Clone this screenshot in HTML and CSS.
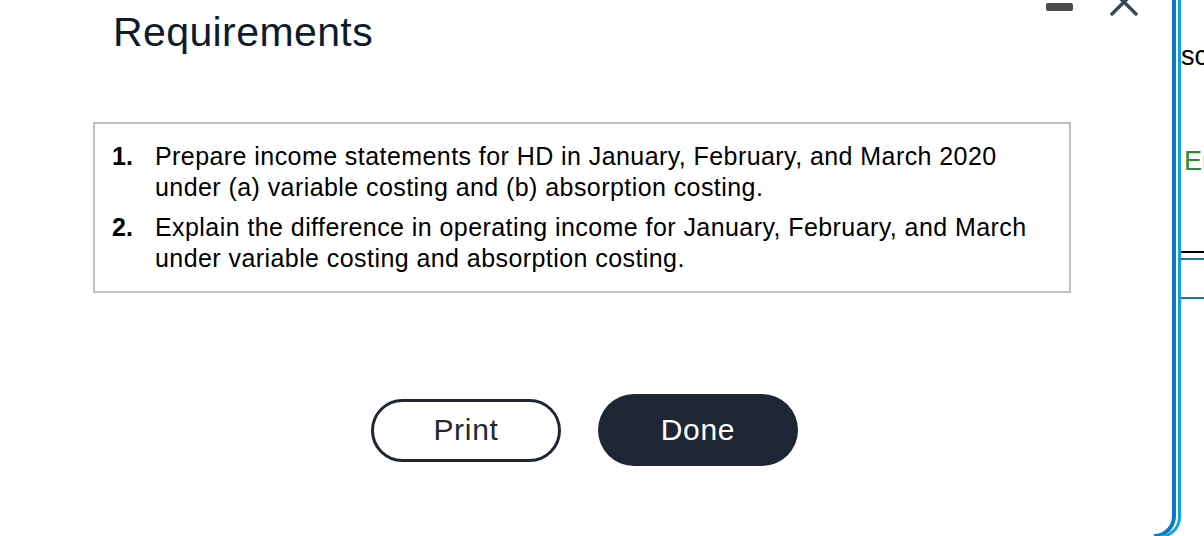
FILE: index.html
```html
<!DOCTYPE html>
<html lang="en">
<head>
<meta charset="utf-8">
<title>Requirements</title>
<link rel="stylesheet" href="styles.css">
</head>
<body>
<div class="screen">
  <div class="dialog">
    <div class="header">
      <h1 class="title">Requirements</h1>
      <div class="controls">
        <span class="minimize"></span>
        <svg class="close" width="28" height="16" viewBox="0 0 28 16" aria-hidden="true">
          <line x1="2" y1="14" x2="26" y2="-10"/>
          <line x1="26" y1="14" x2="2" y2="-10"/>
        </svg>
      </div>
    </div>
    <div class="req-box">
      <div class="req-item">
        <span class="num">1.</span>
        <span class="req-text">Prepare income statements for HD in January, February, and March 2020 under (a) variable costing and (b) absorption costing.</span>
      </div>
      <div class="req-item">
        <span class="num">2.</span>
        <span class="req-text">Explain the difference in operating income for January, February, and March under variable costing and absorption costing.</span>
      </div>
    </div>
    <div class="actions">
      <button class="btn btn-print">Print</button>
      <button class="btn btn-done">Done</button>
    </div>
  </div>
  <div class="sidebar">
    <div class="side-sc">sc</div>
    <div class="side-er">Er</div>
    <div class="rule-black"></div>
    <div class="rule-teal"></div>
    <div class="rule-teal rule-teal-2"></div>
  </div>
</div>
</body>
</html>
```

FILE: styles.css
```css
html, body {
  margin: 0;
  padding: 0;
  background: #ffffff;
}

body {
  font-family: "Liberation Sans", Arial, sans-serif;
  overflow: hidden;
}

.screen {
  display: flex;
  width: 1204px;
  height: 536px;
  overflow: hidden;
}

.dialog {
  flex: 0 0 1172px;
  display: flex;
  flex-direction: column;
}

.header {
  display: flex;
  justify-content: space-between;
  align-items: flex-start;
  padding: 0 34px 0 113px;
  height: 56px;
}

.title {
  margin: 8px 0 0 0;
  font-size: 41px;
  line-height: 48px;
  font-weight: normal;
  letter-spacing: 0.4px;
  color: #0e1b2e;
}

.controls {
  display: flex;
  align-items: flex-start;
  gap: 37px;
}

.minimize {
  display: block;
  width: 27px;
  height: 8px;
  margin-top: 3px;
  border-radius: 2px;
  background: #4b4b4d;
}

.close {
  display: block;
}

.close line {
  stroke: #3a4959;
  stroke-width: 3.5;
  stroke-linecap: round;
}

.req-box {
  margin: 66px 0 0 93px;
  width: 978px;
  height: 171px;
  border: 2px solid #c0c0c0;
  padding: 17px 0 0 17px;
  box-sizing: border-box;
  display: flex;
  flex-direction: column;
  gap: 9px;
}

.req-item {
  display: flex;
  font-size: 25px;
  line-height: 31px;
  letter-spacing: 0.43px;
  color: #000000;
}

.num {
  flex: 0 0 43px;
  font-weight: bold;
  letter-spacing: 0;
}

.req-text {
  flex: 1;
  padding-right: 19px;
}

.actions {
  display: flex;
  justify-content: center;
  align-items: center;
  gap: 37px;
  margin-top: 101px;
  padding-right: 3px;
}

.btn {
  font-family: "Liberation Sans", Arial, sans-serif;
  font-size: 30px;
  letter-spacing: 0.7px;
  cursor: pointer;
  padding: 0;
}

.btn-print {
  width: 190px;
  height: 63px;
  border: 3px solid #1f2733;
  border-radius: 32px;
  background: #ffffff;
  color: #1f2733;
}

.btn-done {
  width: 200px;
  height: 72px;
  border: none;
  border-radius: 36px;
  background: #1e2633;
  color: #ffffff;
}

.sidebar {
  flex: 1;
  position: relative;
  padding-left: 9px;
  box-sizing: border-box;
}

.sidebar::before,
.sidebar::after {
  content: "";
  position: absolute;
  top: 0;
  bottom: -2px;
  width: 18px;
  border-bottom-right-radius: 22px;
  pointer-events: none;
}

/* dark blue rail */
.sidebar::before {
  left: -18px;
  border-right: 4px solid #0a7cc6;
  border-bottom: 4px solid #0a7cc6;
}

/* light blue rail */
.sidebar::after {
  left: -12px;
  border-right: 3px solid #12a1dc;
  border-bottom: 3px solid #12a1dc;
}

.side-sc {
  margin-top: 39px;
  font-size: 27px;
  line-height: 34px;
  color: #000;
}

.side-er {
  margin-top: 71px;
  margin-left: 3px;
  font-size: 27px;
  line-height: 34px;
  color: #2c8c2c;
}

.rule-black {
  margin-top: 73px;
  height: 2px;
  background: #000;
}

.rule-teal {
  margin-top: 5px;
  height: 2px;
  background: #1b7c9d;
}

.rule-teal-2 {
  margin-top: 37px;
}
```
